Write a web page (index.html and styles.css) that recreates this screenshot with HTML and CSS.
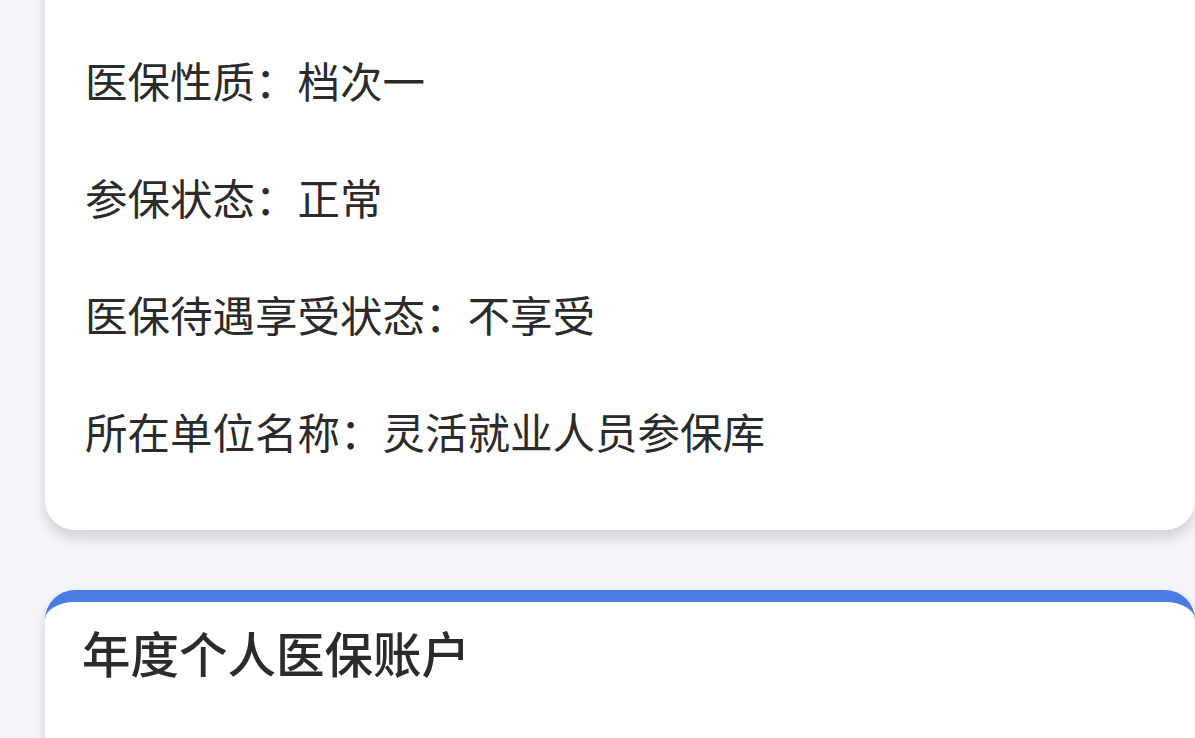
FILE: index.html
```html
<!DOCTYPE html>
<html lang="zh-CN">
<head>
    <meta charset="UTF-8">
    <meta name="viewport" content="width=device-width, initial-scale=1.0">
    <title>医保信息</title>
    <link rel="stylesheet" href="styles.css">
</head>
<body>
    <div class="page">
        <div class="card info-card">
            <div class="row">医保性质：档次一</div>
            <div class="row">参保状态：正常</div>
            <div class="row">医保待遇享受状态：不享受</div>
            <div class="row">所在单位名称：灵活就业人员参保库</div>
        </div>

        <div class="card account-card">
            <h2 class="card-title">年度个人医保账户</h2>
        </div>
    </div>
</body>
</html>
```

FILE: styles.css
```css
body {
    font-family: "Noto Sans CJK SC", "Noto Sans", sans-serif;
    margin: 0;
    padding: 0;
    background-color: #f4f4f9;
    color: #2b2b2b;
    overflow: hidden;
}

.page {
    padding-left: 45px;
    margin-top: -43px;
}

.card {
    background-color: #ffffff;
    width: 1150px;
    border-radius: 30px;
    box-shadow: 0 8px 14px rgba(0, 0, 0, 0.14);
}

.info-card {
    padding: 64px 40px 41px;
    box-sizing: border-box;
}

.row {
    font-size: 42.5px;
    line-height: 117px;
    height: 117px;
}

.account-card {
    margin-top: 60px;
    border-top: 12px solid #4a7ce3;
    padding: 17px 37px 80px;
    box-sizing: border-box;
}

.card-title {
    margin: 0;
    font-size: 48.5px;
    font-weight: 500;
    line-height: 66px;
}
```
